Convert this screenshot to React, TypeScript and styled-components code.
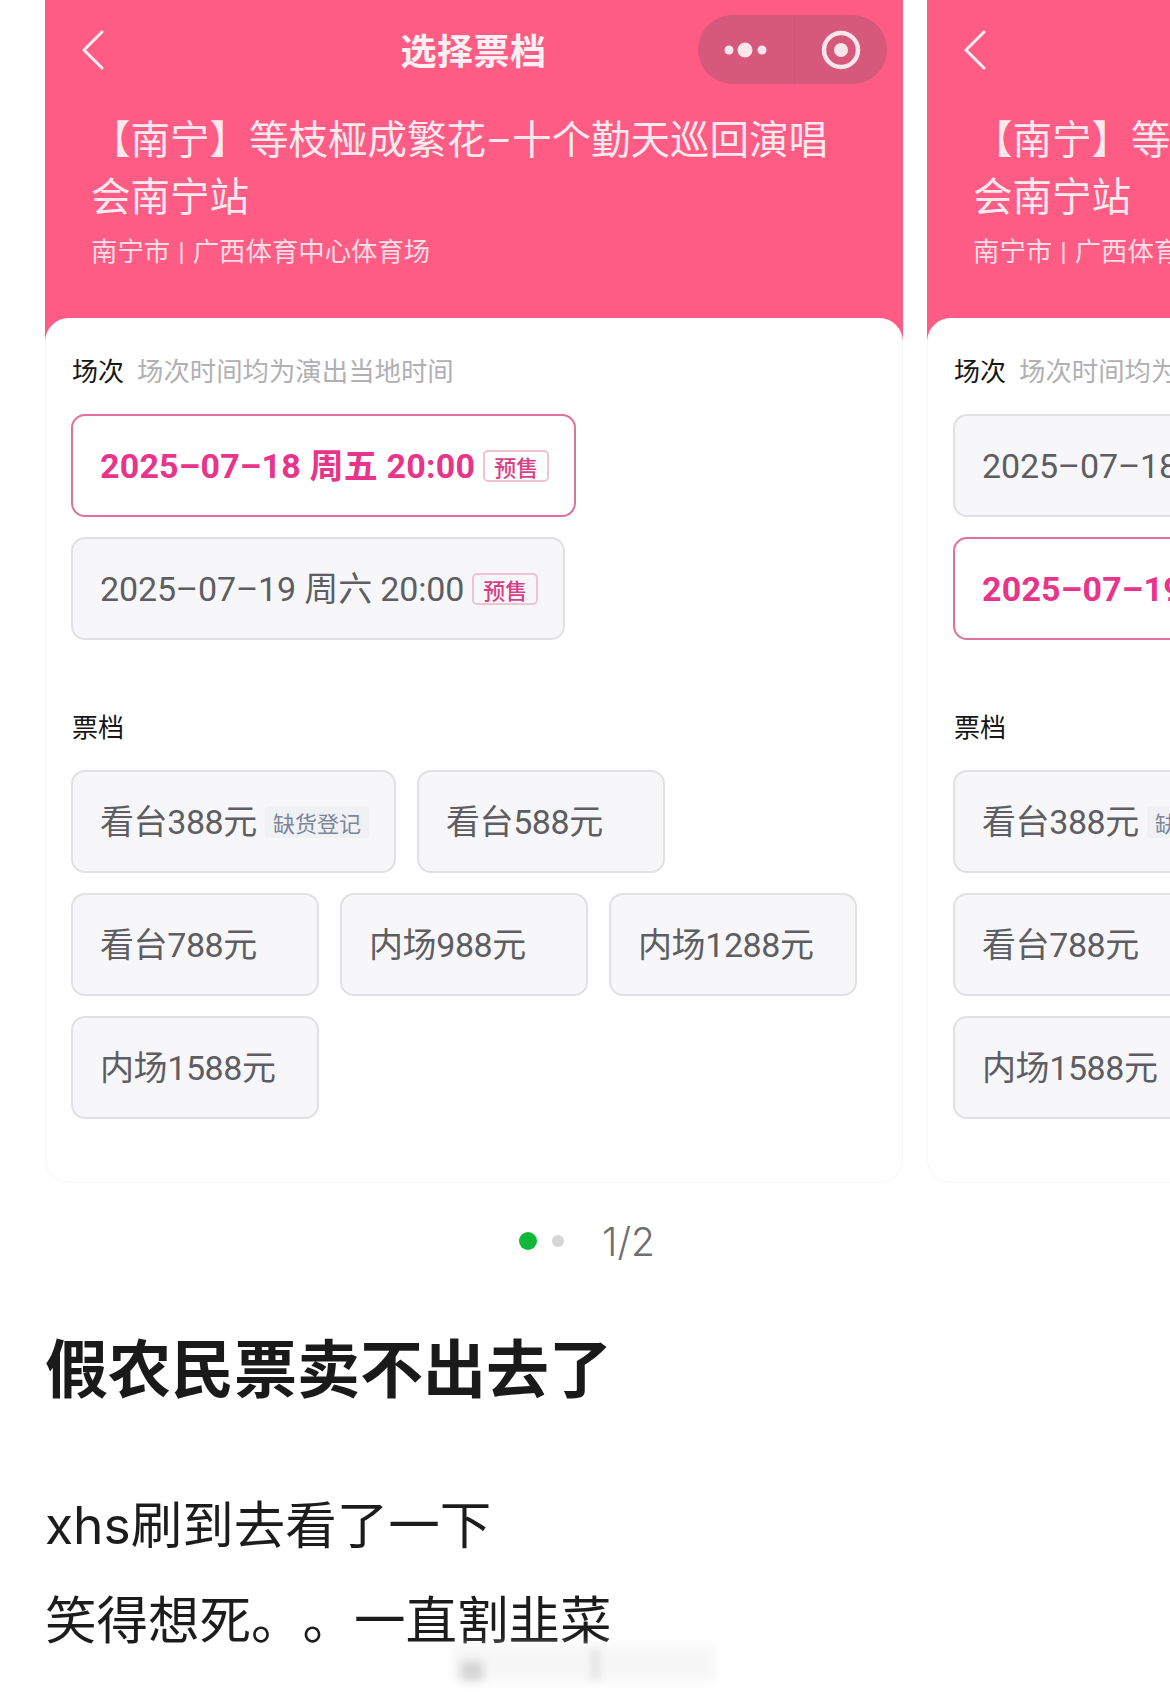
import React from 'react';
import styled, { createGlobalStyle } from 'styled-components';

const GlobalStyle = createGlobalStyle`
  html, body {
    margin: 0;
    padding: 0;
    background: #fff;
  }
  body {
    font-family: Roboto, "Noto Sans CJK SC", sans-serif;
    text-spacing-trim: space-all;
  }
`;

const Page = styled.div`
  position: relative;
  width: 1170px;
  height: 1692px;
  overflow: hidden;
  background: #fff;
`;

const Carousel = styled.div`
  display: flex;
  gap: 24px;
  padding-left: 45px;
`;

const Card = styled.section`
  flex: 0 0 858px;
`;

const Header = styled.header`
  height: 342px;
  box-sizing: border-box;
  padding-top: 15px;
  background: #fe5c84;
  color: #fff;
  overflow: hidden;
`;

const Nav = styled.div`
  display: grid;
  grid-template-columns: minmax(0, 1fr) auto minmax(0, 1fr);
  align-items: center;
  height: 69px;
  padding: 0 16px 0 15px;
`;

const BackButton = styled.div`
  display: flex;
  margin-left: 21px;
`;

const NavTitle = styled.h1`
  margin: -2px 0 0;
  font-size: 36px;
  font-weight: 700;
  letter-spacing: 0.5px;
  color: #fdf0f3;
`;

const Capsule = styled.div`
  justify-self: end;
  flex: none;
  display: grid;
  grid-template-columns: 96px 93px;
  width: 189px;
  height: 69px;
  border-radius: 35px;
  background: #d6587a;
`;

const CapsuleCell = styled.div<{ $divided?: boolean }>`
  display: flex;
  align-items: center;
  justify-content: center;
  border-left: ${(props) => (props.$divided ? '1px solid #cf5474' : 'none')};
`;

const TitleBlock = styled.div`
  margin-top: 28px;
  padding-left: 46px;
  max-width: 770px;
`;

const ShowTitle = styled.h2`
  margin: 0;
  font-size: 39.5px;
  line-height: 57px;
  font-weight: 400;
  color: #fbe9ee;
`;

const Venue = styled.p`
  margin: 8px 0 0;
  font-size: 26.4px;
  line-height: 36px;
  font-weight: 400;
  word-spacing: 1.5px;
  color: #fcdde5;
`;

const Panel = styled.div`
  position: relative;
  height: 865px;
  box-sizing: border-box;
  margin-top: -24px;
  padding: 33px 25px 0;
  background: #fff;
  border: 1px solid #f6f6f6;
  border-top: none;
  border-radius: 24px;
`;

const LabelRow = styled.div`
  display: flex;
  align-items: center;
  gap: 13px;
  height: 36px;
  padding-left: 1px;
`;

const Label = styled.span`
  font-size: 26px;
  color: #161616;
`;

const Hint = styled.span`
  font-size: 26.4px;
  font-weight: 400;
  color: #b0b0b3;
  white-space: nowrap;
`;

const Sessions = styled.div`
  display: flex;
  flex-direction: column;
  align-items: flex-start;
  gap: 20px;
  margin: 27px 0 67px;
`;

const Choice = styled.div<{ $selected?: boolean }>`
  display: inline-flex;
  align-items: center;
  gap: 8px;
  box-sizing: border-box;
  height: 103px;
  min-width: 248px;
  padding: 0 25px 4px 27px;
  border: 2px solid ${(props) => (props.$selected ? '#e0719c' : '#e1e1e4')};
  border-radius: 14px;
  background: ${(props) => (props.$selected ? '#fff' : '#f7f7fa')};
  color: ${(props) => (props.$selected ? '#e8348a' : '#5d5d62')};
  font-size: 34px;
  font-weight: ${(props) => (props.$selected ? 700 : 400)};
  letter-spacing: ${(props) => (props.$selected ? '0.2px' : '-0.15px')};
  white-space: nowrap;
`;

const TicketChoice = styled(Choice)`
  letter-spacing: -0.4px;
`;

const PresaleTag = styled.span`
  display: inline-flex;
  align-items: center;
  justify-content: center;
  box-sizing: border-box;
  width: 66px;
  height: 32px;
  margin-top: 4px;
  border: 2px solid #efc3d3;
  border-radius: 5px;
  font-size: 22px;
  font-weight: 500;
  letter-spacing: 0;
  color: #d83f87;
`;

const Tickets = styled.div`
  display: flex;
  flex-wrap: wrap;
  gap: 20px 21px;
  margin-top: 27px;
`;

const SoldOutTag = styled.span`
  display: inline-flex;
  align-items: center;
  justify-content: center;
  height: 32px;
  margin-top: 4px;
  padding: 0 8px;
  border-radius: 4px;
  background: #eff1f5;
  color: #7d8699;
  font-size: 22px;
  letter-spacing: 0;
`;

const Pager = styled.div`
  display: flex;
  align-items: center;
  justify-content: center;
  height: 46px;
  margin: 35px 0 0 4px;
`;

const Dots = styled.div`
  display: flex;
  align-items: center;
  gap: 15px;
  margin-right: 38px;
`;

const Dot = styled.span<{ $active?: boolean }>`
  display: block;
  width: ${(props) => (props.$active ? 18 : 12)}px;
  height: ${(props) => (props.$active ? 18 : 12)}px;
  border-radius: 50%;
  background: ${(props) => (props.$active ? '#11b838' : '#d6d6d6')};
`;

const PageCount = styled.span`
  font-family: Inter, sans-serif;
  font-size: 39px;
  font-weight: 300;
  color: #6f6f6f;
`;

const Article = styled.article`
  padding: 62px 45px 0;
`;

const Heading = styled.h3`
  margin: 0 0 62px;
  font-size: 63px;
  line-height: 90px;
  font-weight: 700;
  color: #1a1a1a;
`;

const BodyLine = styled.p`
  margin: 0;
  font-family: Inter, "Noto Sans CJK SC", sans-serif;
  font-size: 51.5px;
  line-height: 95px;
  color: #1c1c1c;
`;

const Watermark = styled.div`
  position: absolute;
  left: 453px;
  top: 1645px;
  width: 262px;
  height: 36px;
  display: flex;
  align-items: flex-end;
  background: rgba(244, 244, 244, 0.7);
  filter: blur(5px);
`;

const Smudge = styled.span<{ $wide?: boolean }>`
  display: block;
  width: ${(props) => (props.$wide ? 22 : 5)}px;
  height: ${(props) => (props.$wide ? 20 : 32)}px;
  margin-left: ${(props) => (props.$wide ? 8 : 110)}px;
  background: #d4d4d4;
`;

const BackIcon = () => (
  <svg width="24" height="40" viewBox="0 0 24 40" fill="none">
    <path d="M21 2 L3 20 L21 38" stroke="#fdf0f3" strokeWidth="3" strokeLinecap="round" strokeLinejoin="round" />
  </svg>
);

const MoreIcon = () => (
  <svg width="44" height="20" viewBox="0 0 44 20" fill="#fbe6ec">
    <circle cx="5" cy="10" r="4.5" />
    <circle cx="21" cy="10" r="7.5" />
    <circle cx="38" cy="10" r="4.5" />
  </svg>
);

const CloseIcon = () => (
  <svg width="40" height="40" viewBox="0 0 40 40" fill="none">
    <circle cx="20" cy="20" r="17" stroke="#fbe6ec" strokeWidth="4.5" />
    <circle cx="20" cy="20" r="7" fill="#fbe6ec" />
  </svg>
);

const sessions = ['2025–07–18 周五 20:00', '2025–07–19 周六 20:00'];
const tickets = ['看台388元', '看台588元', '看台788元', '内场988元', '内场1288元', '内场1588元'];

const TicketCard: React.FC<{ selectedSession: number }> = ({ selectedSession }) => (
  <Card>
    <Header>
      <Nav>
        <BackButton>
          <BackIcon />
        </BackButton>
        <NavTitle>选择票档</NavTitle>
        <Capsule>
          <CapsuleCell>
            <MoreIcon />
          </CapsuleCell>
          <CapsuleCell $divided>
            <CloseIcon />
          </CapsuleCell>
        </Capsule>
      </Nav>
      <TitleBlock>
        <ShowTitle>【南宁】等枝桠成繁花–十个勤天巡回演唱会南宁站</ShowTitle>
        <Venue>南宁市 | 广西体育中心体育场</Venue>
      </TitleBlock>
    </Header>
    <Panel>
      <LabelRow>
        <Label>场次</Label>
        <Hint>场次时间均为演出当地时间</Hint>
      </LabelRow>
      <Sessions>
        {sessions.map((session, index) => (
          <Choice key={session} $selected={index === selectedSession}>
            {session}
            <PresaleTag>预售</PresaleTag>
          </Choice>
        ))}
      </Sessions>
      <LabelRow>
        <Label>票档</Label>
      </LabelRow>
      <Tickets>
        {tickets.map((ticket, index) => (
          <TicketChoice key={ticket}>
            {ticket}
            {index === 0 && <SoldOutTag>缺货登记</SoldOutTag>}
          </TicketChoice>
        ))}
      </Tickets>
    </Panel>
  </Card>
);

const App: React.FC = () => (
  <Page>
    <GlobalStyle />
    <Carousel>
      <TicketCard selectedSession={0} />
      <TicketCard selectedSession={1} />
    </Carousel>
    <Pager>
      <Dots>
        <Dot $active />
        <Dot />
      </Dots>
      <PageCount>1/2</PageCount>
    </Pager>
    <Article>
      <Heading>假农民票卖不出去了</Heading>
      <BodyLine>xhs刷到去看了一下</BodyLine>
      <BodyLine>笑得想死。。一直割韭菜</BodyLine>
    </Article>
    <Watermark>
      <Smudge $wide />
      <Smudge />
    </Watermark>
  </Page>
);

export default App;
